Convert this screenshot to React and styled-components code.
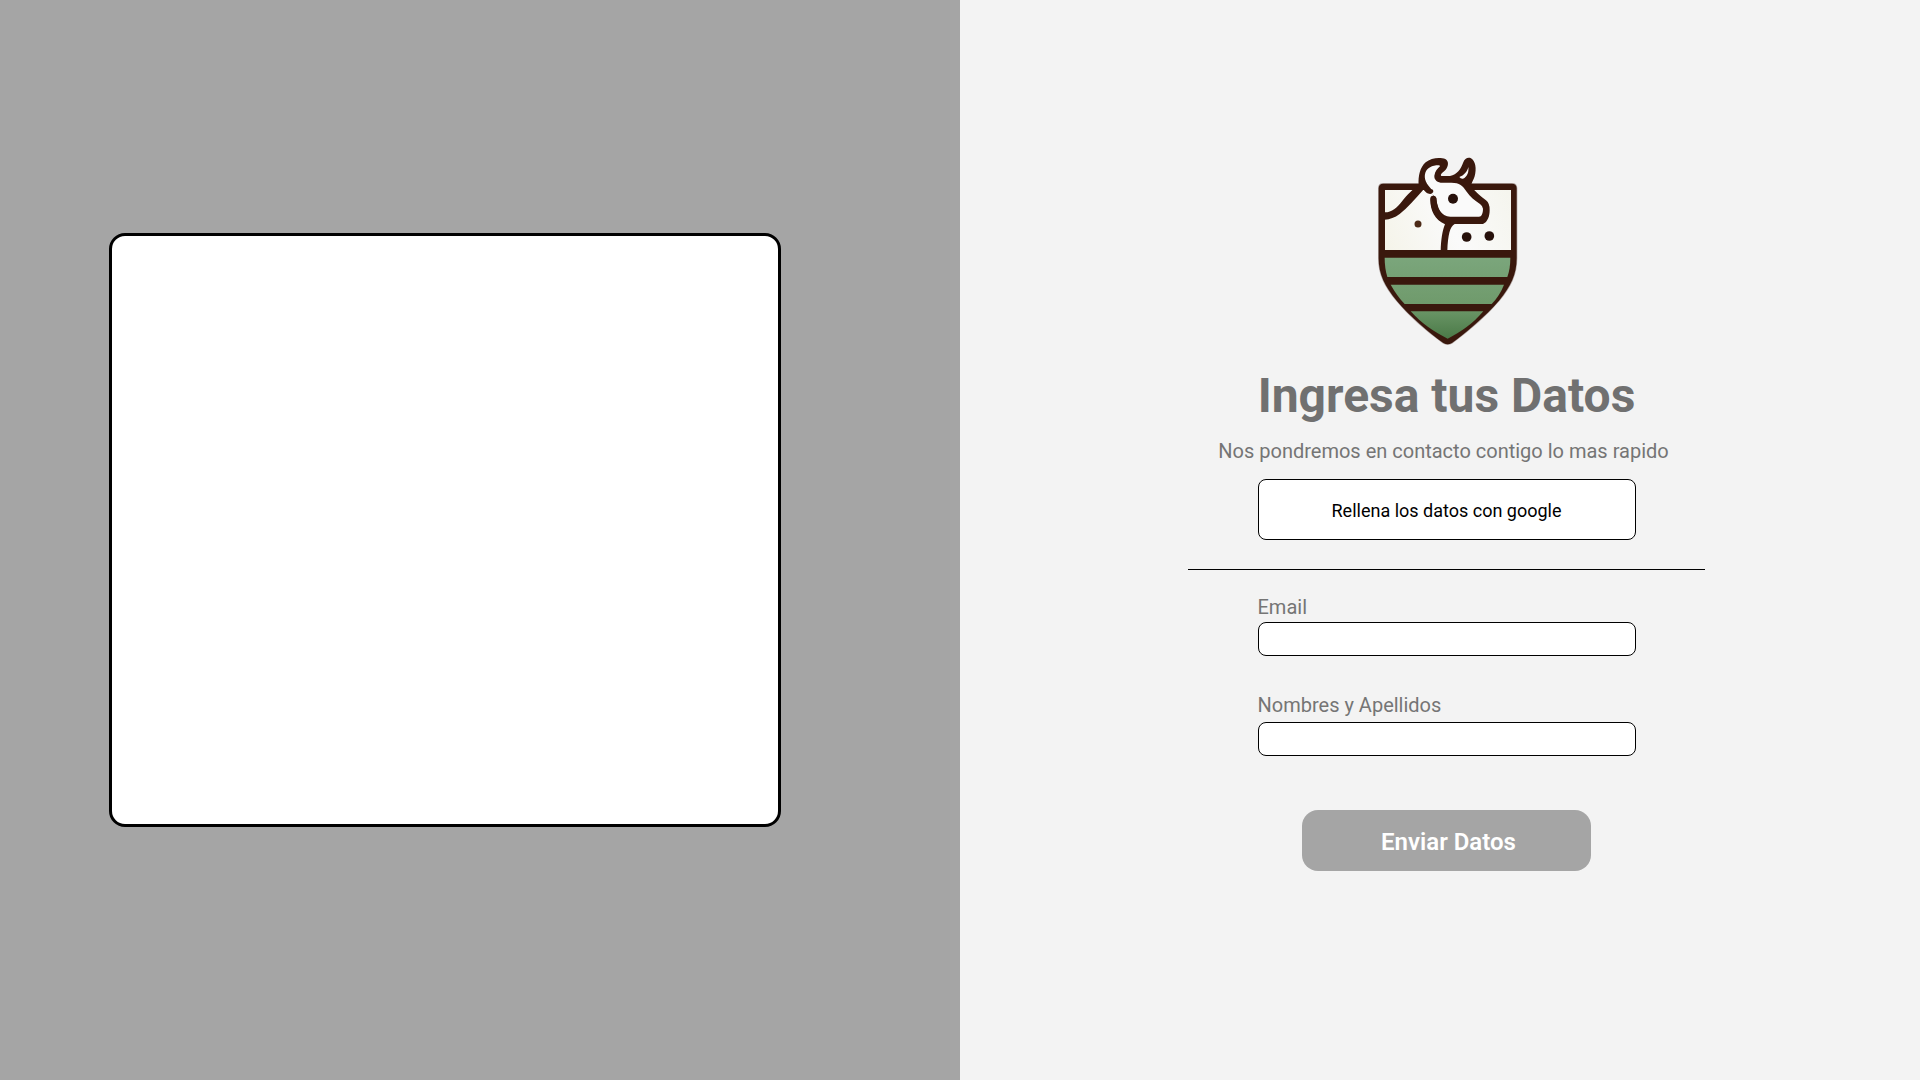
import React from "react";
import styled, { createGlobalStyle } from "styled-components";

const GlobalStyle = createGlobalStyle`
  * { box-sizing: border-box; }
  body { margin: 0; font-family: Roboto, "Liberation Sans", sans-serif; }
`;

const Page = styled.main`
  display: grid;
  grid-template-columns: 1fr 1fr;
  height: 1080px;
  overflow: hidden;
`;

const MediaPanel = styled.section`
  background: #a5a5a5;
  padding: 233px 0 0 109px;
`;

const MediaCard = styled.div`
  width: 672px;
  height: 594px;
  background: #fff;
  border: 3px solid #000;
  border-radius: 16px;
`;

const FormPanel = styled.section`
  background: #f3f3f3;
  padding: 145px 0 0 13px;
  display: flex;
  flex-direction: column;
  align-items: center;
`;

const Logo = styled.svg`
  width: 175px;
  height: 210px;
  margin-left: 2px;
  flex: none;
`;

const Title = styled.h1`
  margin: 13px 0 0;
  font-size: 48px;
  line-height: 56px;
  font-weight: 700;
  color: #707070;
  white-space: nowrap;
`;

const Subtitle = styled.p`
  margin: 15px 6px 0 0;
  font-size: 20px;
  line-height: 24px;
  color: #757575;
  white-space: nowrap;
`;

const GoogleButton = styled.button`
  width: 378px;
  height: 61px;
  margin: 16px 0 29px;
  padding: 2px 0 0;
  background: #fff;
  border: 1px solid #000;
  border-radius: 8px;
  font: 400 18px/22px Roboto, sans-serif;
  color: #000;
`;

const Divider = styled.hr`
  width: 517px;
  height: 1px;
  margin: 0;
  border: 0;
  background: #000;
`;

const Field = styled.label`
  display: flex;
  flex-direction: column;
  gap: ${(p) => p.$gap}px;
  width: 378px;
  margin-top: ${(p) => p.$top}px;
  font-size: 20px;
  line-height: 24px;
  color: #757575;
`;

const Input = styled.input`
  width: 100%;
  height: 34px;
  padding: 0 10px;
  background: #fff;
  border: 1px solid #000;
  border-radius: 8px;
`;

const SubmitButton = styled.button`
  width: 289px;
  height: 61px;
  margin-top: 54px;
  padding: 2px 0 0 4px;
  background: #a5a5a5;
  border: 0;
  border-radius: 16px;
  font: 600 24px/28px Roboto, sans-serif;
  color: #fff;
`;

function ShieldLogo() {
  return (
    <Logo viewBox="0 0 525 630" fill="none">
      <defs>
        <linearGradient id="field" x1="0" y1="335" x2="0" y2="580" gradientUnits="userSpaceOnUse">
          <stop offset="0" stopColor="#7ba67c" />
          <stop offset="0.6" stopColor="#6f9a6b" />
          <stop offset="1" stopColor="#4b7a48" />
        </linearGradient>
        <linearGradient id="hide" x1="80" y1="300" x2="440" y2="130" gradientUnits="userSpaceOnUse">
          <stop offset="0" stopColor="#f5f4ea" />
          <stop offset="0.5" stopColor="#fafafa" />
          <stop offset="1" stopColor="#f5f5ee" />
        </linearGradient>
      </defs>
      <path
        d="M56 130Q56 116 70 116H456Q470 116 470 130V340C470 388 452 425 417 467C377 514 314 566 276 594Q263 602 250 594C211 566 149 514 110 467C75 425 56 388 56 340Z"
        fill="#3a180d"
        stroke="#3a180d"
        strokeOpacity="0.35"
        strokeWidth="4"
      />
      <path d="M75 135H453V315H75Z" fill="url(#hide)" />
      <path d="M74 338H451C451 360 448 380 442 396H82C77 380 74 360 74 338Z" fill="url(#field)" />
      <path d="M92 419H432C424 440 411 460 395 477H134C118 460 104 440 92 419Z" fill="url(#field)" />
      <path d="M152 499H370C340 535 302 562 263 581C223 562 184 535 152 499Z" fill="url(#field)" />
      <path
        d="M176 122C174 92 180 68 197 52C213 38 240 36 256 42C268 49 265 65 257 74C246 84 240 88 244 93H270C292 88 302 73 309 54C314 40 324 36 333 40C347 48 350 72 344 94C340 107 333 115 334 124C347 143 362 154 378 166Q390 176 389 196C389 213 383 232 369 237H284C270 244 264 270 262 318H242C243 284 247 257 255 238C224 224 211 196 211 165Q211 155 221 155L216 145C210 148 203 143 198 138L190 134C166 161 142 188 119 207C104 218 90 223 74 224V202C97 202 110 188 125 170C143 148 158 131 176 122Z"
        fill="#3a180d"
      />
      <path
        d="M236 61C216 61 201 69 196 83C190 102 201 118 213 131Q220 139 214 146L229 159C231 184 239 202 254 211Q260 215 271 215H357C365 215 369 205 369 191Q369 184 360 177C344 166 330 155 320 140C308 122 299 113 274 113H247C233 113 222 105 223 92C225 78 233 70 240 64Q240 61 236 61Z"
        fill="#fafafa"
      />
      <path d="M325 66C322 80 312 91 298 96Q302 102 309 101C322 96 327 81 325 66Z" fill="#fafafa" />
      <path d="M197 132Q204 143 214 139" stroke="#3a180d" strokeWidth="12" strokeLinecap="round" />
      <path d="M220 161Q221 195 242 218" stroke="#3a180d" strokeWidth="18" strokeLinecap="round" />
      <circle cx="279" cy="161" r="15" fill="#27110b" />
      <circle cx="174" cy="237" r="10.5" fill="#4c2a17" />
      <circle cx="320" cy="276" r="14.5" fill="#27110b" />
      <circle cx="388" cy="273" r="14.5" fill="#27110b" />
    </Logo>
  );
}

export default function App() {
  return (
    <>
      <GlobalStyle />
      <Page>
        <MediaPanel>
          <MediaCard />
        </MediaPanel>
        <FormPanel>
          <ShieldLogo />
          <Title>Ingresa tus Datos</Title>
          <Subtitle>Nos pondremos en contacto contigo lo mas rapido</Subtitle>
          <GoogleButton type="button">Rellena los datos con google</GoogleButton>
          <Divider />
          <Field $top={25} $gap={3}>
            Email
            <Input type="email" />
          </Field>
          <Field $top={37} $gap={5}>
            Nombres y Apellidos
            <Input type="text" />
          </Field>
          <SubmitButton type="button">Enviar Datos</SubmitButton>
        </FormPanel>
      </Page>
    </>
  );
}
